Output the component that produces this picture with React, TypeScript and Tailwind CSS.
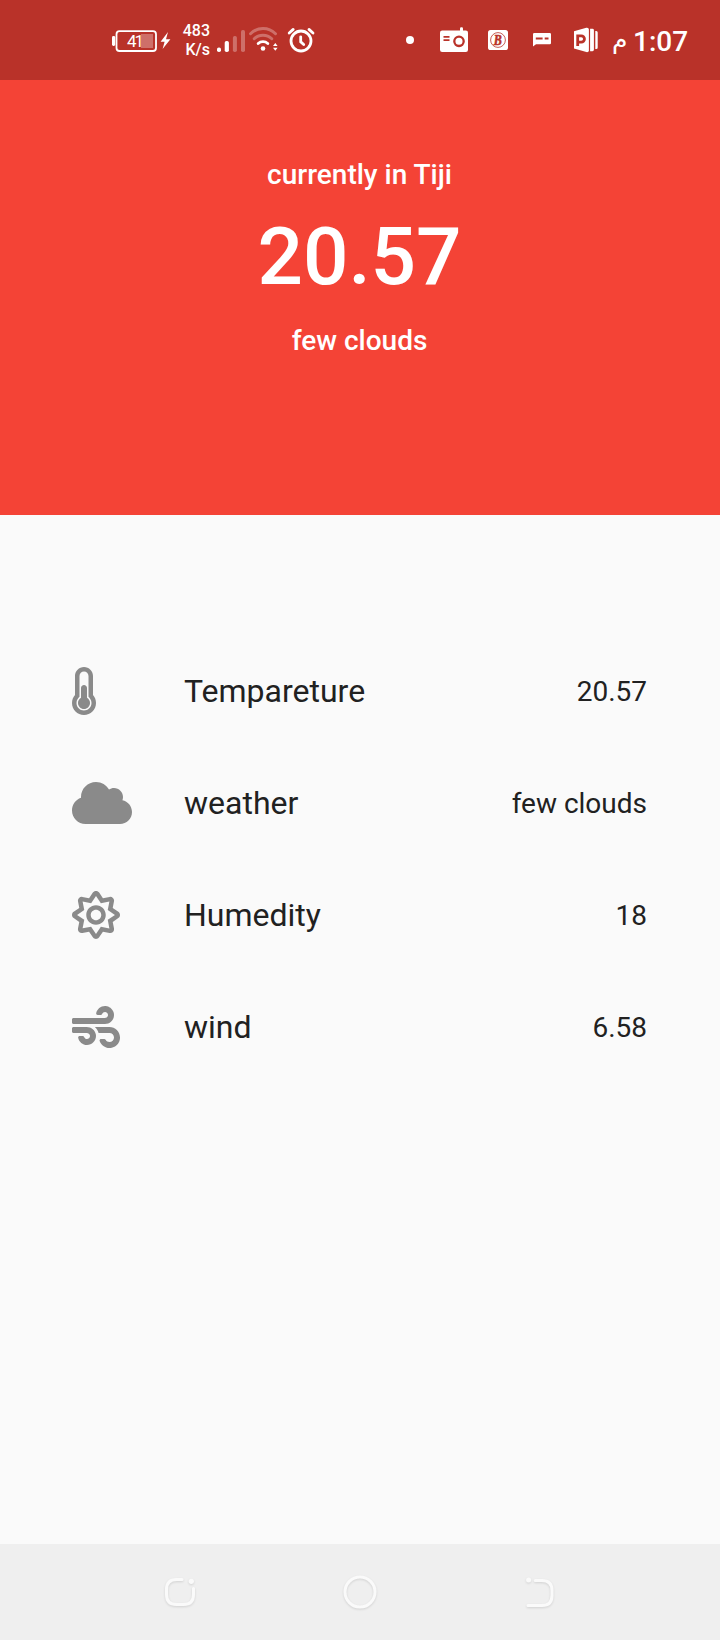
import React from "react";
import type { IconType } from "react-icons";
import { FaThermometerHalf, FaCloud, FaRegSun, FaWind } from "react-icons/fa";

function Battery() {
  return (
    <svg className="ml-[112px] h-8 w-[60px] shrink-0" viewBox="112 24 60 32" fill="#fff">
      <rect x="112" y="36" width="3.2" height="10" rx="1.4" />
      <rect x="116.5" y="31.2" width="39.5" height="19.8" rx="3" fill="none" stroke="#fff" strokeWidth="1.8" />
      <rect x="141" y="34" width="12" height="14" fillOpacity=".3" />
      <text x="127" y="47" fontSize="17" fontFamily="Roboto, sans-serif" textLength="17">41</text>
      <path d="M168 32 160.6 41.8h4l-2 7.2 7.8-9.8h-4.4z" />
    </svg>
  );
}

function Signal() {
  return (
    <svg className="ml-[6px] h-8 w-8 shrink-0" viewBox="216 24 32 32" fill="#fff">
      <rect x="217" y="47.5" width="4" height="4.5" rx="1.8" />
      <rect x="224.7" y="41" width="4.2" height="11" rx="1.8" />
      <rect x="232.9" y="36" width="4" height="16" rx="1.8" fillOpacity=".3" />
      <rect x="241" y="30" width="4" height="22" rx="1.8" fillOpacity=".3" />
    </svg>
  );
}

function Wifi() {
  return (
    <svg className="h-8 w-8 shrink-0" viewBox="248 24 32 32" fill="none" stroke="#fff" strokeWidth="2.9" strokeLinecap="round">
      <path d="M250.5 33.8a17.5 17.5 0 0 1 25 0" strokeOpacity=".3" />
      <path d="M254.2 38.8a12.5 12.5 0 0 1 17.6 0" strokeOpacity=".3" />
      <path d="M258.2 43.5a7.2 7.2 0 0 1 9.6 0" />
      <circle cx="263" cy="48.5" r="2.3" fill="#fff" stroke="none" />
      <path d="m273 46 2.3-3 2.3 3zm0 1.8 2.3 3 2.3-3z" fill="#fff" stroke="none" />
    </svg>
  );
}

function Alarm() {
  return (
    <svg className="ml-[6px] h-8 w-8 shrink-0" viewBox="286 24 32 32" fill="none" stroke="#fff" strokeWidth="2.8" strokeLinecap="round">
      <circle cx="301" cy="41" r="10" />
      <path d="M300.7 36.8v5l3 2.8" />
      <path d="m289.2 33 4-3.6M313 33l-4-3.6" />
    </svg>
  );
}

function Radio() {
  return (
    <svg className="ml-6 h-8 w-8 shrink-0" viewBox="438 24 32 32">
      <rect x="460" y="27.3" width="3" height="6" rx="1.2" fill="#fff" />
      <rect x="440" y="30.4" width="28" height="21.6" rx="2.2" fill="#fff" />
      <circle cx="459" cy="41.3" r="4.7" fill="none" stroke="#b93229" strokeWidth="2.3" />
      <path d="M443.5 36.8h6M443.5 40.2h6" stroke="#b93229" strokeWidth="1.8" />
    </svg>
  );
}

function BadgeB() {
  return (
    <svg className="ml-[14px] h-8 w-7 shrink-0" viewBox="484 24 28 32">
      <rect x="488" y="30" width="20" height="20" rx="2.6" fill="#fff" />
      <circle cx="498" cy="40" r="7.4" fill="none" stroke="#b93229" strokeWidth=".8" />
      <text x="497.8" y="44.9" fontSize="14" fontWeight="700" fontStyle="italic" textAnchor="middle" fill="#b93229" stroke="#b93229" strokeWidth=".6" fontFamily="Liberation Serif, serif" textLength="8" lengthAdjust="spacingAndGlyphs">B</text>
    </svg>
  );
}

function Message() {
  return (
    <svg className="ml-[18px] h-8 w-6 shrink-0" viewBox="530 24 24 32">
      <path d="M534.2 33h15.6q1.2 0 1.2 1.2v8.8q0 1.2-1.2 1.2H536l-3 2.4V34.2q0-1.2 1.2-1.2z" fill="#fff" />
      <path d="M535.8 38.5h6.8M544.7 38.5h3.8" stroke="#b93229" strokeWidth="2" />
    </svg>
  );
}

function Presentation() {
  return (
    <svg className="ml-[18px] h-8 w-7 shrink-0" viewBox="572 24 28 32" fill="#fff">
      <path d="m574 31.2 12.3-3.5q2.6-.4 2.6 1.8v20.8q0 2.2-2.6 1.8L574 48.6z" />
      <path d="M577.7 46V35.8h3.6a3.1 3.1 0 0 1 0 6.3h-3.6" fill="none" stroke="#b93229" strokeWidth="2.8" />
      <path d="M590.1 28.8h2.4q1.4 0 1.4 1.4v19.6q0 1.4-1.4 1.4h-2.4zM595.3 31h1q1.400 0 1.400 1.500v15q0 1.500-1.400 1.500h-1z" />
    </svg>
  );
}

function StatusBar() {
  return (
    <header className="flex h-20 items-center bg-[#b93229] text-white">
      <Battery />
      <div className="ml-[8px] w-[30px] text-right text-[16px] font-medium leading-[19px]">
        <div>483</div>
        <div>K/s</div>
      </div>
      <Signal />
      <Wifi />
      <Alarm />
      <span className="ml-[88px] size-2 rounded-full bg-white" />
      <Radio />
      <BadgeB />
      <Message />
      <Presentation />
      <span className="ml-[12px] w-[14px] text-[25px] leading-8">م</span>
      <span className="ml-[7px] pt-[3px] text-[28px] font-medium leading-8">1:07</span>
    </header>
  );
}

type Reading = { icon: IconType; iconClass: string; label: string; value: string };

const readings: Reading[] = [
  { icon: FaThermometerHalf, iconClass: "h-12 w-6", label: "Tempareture", value: "20.57" },
  { icon: FaCloud, iconClass: "h-12 w-[60px]", label: "weather", value: "few clouds" },
  { icon: FaRegSun, iconClass: "size-12", label: "Humedity", value: "18" },
  { icon: FaWind, iconClass: "size-12", label: "wind", value: "6.58" },
];

function NavigationBar() {
  return (
    <nav className="grid h-24 grid-cols-[1fr_140px_1fr] items-center bg-[#efefef] [&_svg]:drop-shadow-[0_1px_1px_rgba(0,0,0,0.12)]">
      <svg className="ml-[160px] h-10 w-10" viewBox="160 1572 40 40" fill="none" stroke="#fafafa" strokeWidth="3" strokeLinecap="round">
        <path d="M182 1579.5h-5.5q-10 0-10 10v5q0 10 10 10h7q10 0 10-10v-6" />
        <circle cx="191.3" cy="1581.3" r="2.6" fill="#fafafa" stroke="none" />
      </svg>
      <svg className="mx-auto h-10 w-10" viewBox="340 1572 40 40" fill="none" stroke="#fafafa" strokeWidth="3">
        <circle cx="360" cy="1592" r="15" />
      </svg>
      <svg className="ml-[90px] h-10 w-10" viewBox="520 1572 40 40" fill="none" stroke="#fafafa" strokeWidth="3" strokeLinecap="round">
        <path d="M535.3 1580.5h6.7q10 0 10 10v5q0 10-10 10h-14" />
        <circle cx="528.6" cy="1580" r="2.5" fill="#fafafa" stroke="none" />
      </svg>
    </nav>
  );
}

export default function App() {
  return (
    <div className="flex h-[1640px] w-[720px] flex-col overflow-hidden bg-[#fafafa] font-[Roboto,sans-serif]">
      <StatusBar />
      <section className="flex h-[435px] flex-col items-center bg-[#f44336] pr-px pt-[78px] font-medium text-white">
        <p className="text-[28px] leading-[33px]">currently in Tiji</p>
        <p className="mt-[19px] text-[80px] leading-[94px]">20.57</p>
        <p className="mt-[20px] text-[28px] leading-[33px]">few clouds</p>
      </section>
      <main className="flex-1 pl-[72px] pr-[73px] pt-[120px] text-[#212121]">
        {readings.map(({ icon: Icon, iconClass, label, value }) => (
          <div key={label} className="flex h-28 items-center">
            <div className="w-28 shrink-0 text-[#8a8a8a]">
              <Icon className={iconClass} />
            </div>
            <span className="flex-1 text-[32px] leading-[38px]">{label}</span>
            <span className="text-[28px] leading-[33px]">{value}</span>
          </div>
        ))}
      </main>
      <NavigationBar />
    </div>
  );
}
